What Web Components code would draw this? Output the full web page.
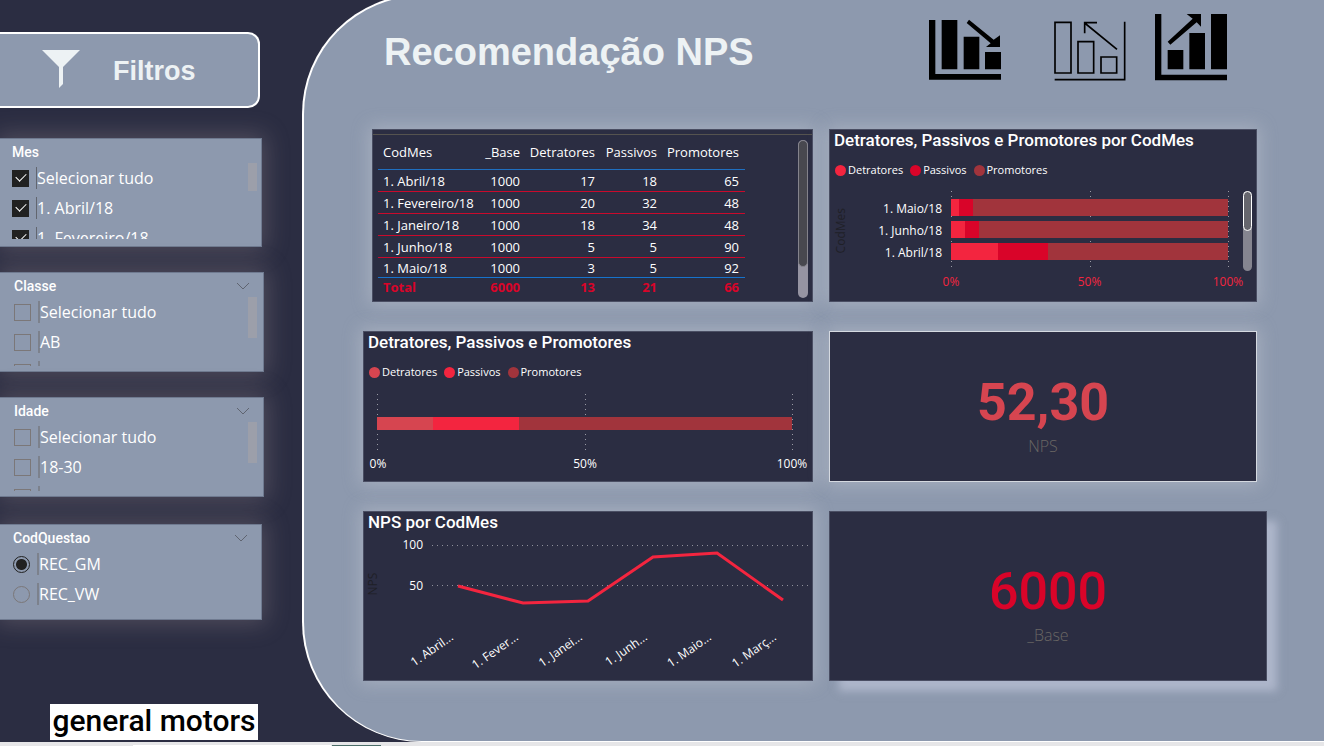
<!DOCTYPE html>
<html lang="pt-BR">
<head>
<meta charset="utf-8">
<meta name="viewport" content="width=device-width, initial-scale=1">
<title>Recomendação NPS</title>
<style>
  :root {
    --ink: #2b2d42; --steel: #8d99ae; --snow: #edf2f4;
    --red: #f3253f; --crimson: #d90429; --brick: #a1343c; --coral: #d64550;
    --ui: "Open Sans", "Noto Sans", sans-serif;
    --din: Roboto, "Open Sans", sans-serif;
  }
  body { margin: 0; background: var(--ink); font-family: var(--ui); color: #fff; }
</style>
</head>
<body>
<nps-report>
  <filter-banner slot="filters">Filtros</filter-banner>
  <slicer-panel slot="filters" class="first" name="Mes" kind="checkbox" options="Selecionar tudo|1. Abril/18|1. Fevereiro/18" checked></slicer-panel>
  <slicer-panel slot="filters" class="wide" name="Classe" kind="checkbox" options="Selecionar tudo|AB|" menu></slicer-panel>
  <slicer-panel slot="filters" class="wide" name="Idade" kind="checkbox" options="Selecionar tudo|18-30|" menu></slicer-panel>
  <slicer-panel slot="filters" class="last" name="CodQuestao" kind="radio" options="REC_GM|REC_VW" menu></slicer-panel>
  <brand-logo slot="filters">general motors</brand-logo>

  <report-header slot="header">Recomendação NPS</report-header>

  <report-card slot="cards" class="table"><score-table></score-table></report-card>
  <report-card slot="cards" class="short" heading="Detratores, Passivos e Promotores por CodMes">
    <month-bars></month-bars>
  </report-card>
  <report-card slot="cards" heading="Detratores, Passivos e Promotores"><total-bar></total-bar></report-card>
  <report-card slot="cards" class="short framed"><kpi-value label="NPS" tone="coral">52,30</kpi-value></report-card>
  <report-card slot="cards" heading="NPS por CodMes"><nps-line></nps-line></report-card>
  <report-card slot="cards" class="lifted"><kpi-value label="_Base" tone="crimson">6000</kpi-value></report-card>
</nps-report>

<script>
const define = (name, html) => {
  const template = document.createElement('template');
  customElements.define(name, class extends HTMLElement {
    connectedCallback() {
      if (this.shadowRoot) return;
      template.innerHTML = typeof html === 'function' ? html(this) : html;
      this.attachShadow({ mode: 'open' }).append(template.content.cloneNode(true));
    }
  });
};

define('nps-report', `
<style>
  :host { display: flex; flex-direction: column; min-height: 100vh; }
  .body { flex: 1; display: grid; grid-template-columns: 302px minmax(0, 1fr); overflow: hidden; }
  aside { display: flex; flex-direction: column; align-items: flex-start; padding: 32px 0 2px; }
  main { box-sizing: border-box; margin-top: -6px; padding-top: 6px; background: var(--steel);
    border: 2px solid #fff; border-right: 0; border-bottom-width: 1px; border-radius: 120px 0 0 120px; }
  .cards { display: grid; grid-template-columns: 450fr 438fr; grid-template-rows: 173px 151px 170px;
    gap: 29px 16px; padding: 0 57px 47px 59px; }
  ::slotted(.first) { margin-top: 30px; width: 262px; }
  ::slotted(.wide) { margin-top: 25px; width: 264px; }
  ::slotted(.last) { margin-top: 27px; width: 262px; }
  ::slotted(brand-logo) { margin: auto 0 0 50px; }
  ::slotted(.table) { margin-left: 9px; }
  ::slotted(.short) { margin-right: 10px; }
  footer { display: grid; grid-template-columns: 132px 198px 49px 1fr; column-gap: 1px; height: 4px; background: #e6e6e8; }
  footer i { margin-top: 3px; }
  footer .open { background: #fff; }
  footer .add { background: #4b6d68; }
</style>
<div class="body">
  <aside><slot name="filters"></slot></aside>
  <main><slot name="header"></slot><div class="cards"><slot name="cards"></slot></div></main>
</div>
<footer><i></i><i class="open"></i><i class="add"></i></footer>`);

define('filter-banner', `
<style>
  :host { box-sizing: border-box; display: flex; align-items: center; gap: 33px; width: 260px; height: 76px;
    padding-left: 42px; background: var(--steel); border: 2px solid #fff; border-left: 0; border-radius: 0 12px 12px 0; }
  h2 { margin: 0; padding-top: 2px; font: bold 27px "Liberation Sans", sans-serif; color: var(--snow); }
</style>
<svg width="38" height="40" viewBox="0 0 38 40" aria-hidden="true"><path d="M0 0H38L21 17V34L17 38V17Z" fill="#edf2f4"/></svg>
<h2><slot></slot></h2>`);

define('slicer-panel', el => {
  const name = el.getAttribute('name'), kind = el.getAttribute('kind');
  const rows = el.getAttribute('options').split('|').map((text, i) => {
    const on = el.hasAttribute('checked') || (kind === 'radio' && i === 0);
    return `<label><input type="${kind}" name="${name}"${on ? ' checked' : ''}${text ? '' : ` aria-label="${name} ${i}"`}><span>${text}</span></label>`;
  }).join('');
  const thumb = kind === 'radio' ? '' : '<i class="thumb"></i>';
  const menu = el.hasAttribute('menu')
    ? `<button aria-label="Opções de ${name}"><svg width="14" height="8" viewBox="0 0 14 8"><path d="M1 1L7 7L13 1" fill="none" stroke="#5f6470"/></svg></button>` : '';
  return `
<style>
  :host { position: relative; box-sizing: border-box; display: block; height: 100px; padding: 5px 0 5px 12px;
    background: var(--steel); border: 1px solid #6f7a90; border-left: 0;
    box-shadow: 0 0 22px 4px rgba(190, 170, 170, .26); }
  :host(.wide) { padding-left: 14px; }
  :host(.first) { height: 109px; }
  :host(.last) { height: 96px; padding-left: 13px; }
  header { display: flex; justify-content: space-between; height: 19px; padding-right: 13px; }
  h3 { margin: 0; font: 500 14px/16px var(--din); }
  button { height: 16px; padding: 0; background: none; border: 0; }
  svg { display: block; }
  fieldset { display: block; min-width: 0; margin: 0; padding: 0; border: 0; overflow: hidden; height: 69px; }
  :host(.first) fieldset { height: 76px; }
  label { display: flex; align-items: center; height: 30px; font-size: 16px; line-height: 22px; white-space: nowrap; }
  span { margin-left: 7px; height: 22px; border-left: 2px solid #7c818c; }
  :host(.first) span { border-left: 1px solid #62666f; }
  input { position: relative; box-sizing: border-box; appearance: none; flex: none; width: 17px; height: 17px; margin: 0; border: 1px solid #7b7778; }
  input[type=checkbox]:checked { background: #212121; border-color: #212121; }
  input[type=checkbox]:checked::after { content: ""; position: absolute; left: 3px; top: 2px; width: 9px; height: 5px;
    border: solid #fff; border-width: 0 0 1px 1px; transform: rotate(-45deg); }
  input[type=radio] { border-radius: 50%; }
  input[type=radio]:checked { border-color: #212121; background: radial-gradient(circle, #212121 5px, transparent 6px); }
  .thumb { position: absolute; right: 6px; top: 24px; width: 9px; height: 41px; background: #9c9faa; }
  :host(.first) .thumb { right: 4px; height: 28px; }
</style>
<header><h3>${name}</h3>${menu}</header><fieldset aria-label="${name}">${rows}</fieldset>${thumb}`;
});

define('brand-logo', `
<style>
  :host { box-sizing: border-box; display: block; width: 208px; height: 36px; background: #fff; color: #000;
    font: 500 30px/34px var(--din); text-align: center; white-space: nowrap; }
</style><slot></slot>`);

define('report-header', `
<style>
  :host { display: flex; justify-content: space-between; height: 127px; padding: 0 97px 0 80px; }
  h1 { margin: 28px 0 0; font: bold 38px/44px "Liberation Sans", sans-serif; color: var(--snow); }
  nav { display: flex; gap: 29px; height: 80px; }
  button { padding: 0; border: 0; background: none; height: 80px; }
  button:first-child { margin-right: 24px; }
  svg { display: block; }
</style>
<h1><slot></slot></h1>
<nav aria-label="Visões">
  <button aria-label="Detratores"><svg width="72" height="80" viewBox="57 3 216 240">
    <path d="M57 57H76V219H273V236H57ZM95 57H142V205H95ZM161 107H208V205H161ZM225 153H273V205H225ZM177 56L251 116L270 103V138H228L242 127L170 66Z"/></svg></button>
  <button aria-label="Passivos"><svg width="72" height="80" viewBox="432 3 216 240">
    <path d="M435 64H483V216H435ZM504 122H551V216H504ZM573 168H620V216H573ZM434 236H644V62M621 145L524 66M524 97V65H561" fill="none" stroke="#000" stroke-width="5"/></svg></button>
  <button aria-label="Promotores"><svg width="72" height="80" viewBox="735 3 216 240">
    <path d="M735 39H754V221H951V238H735ZM773 147H820V205H773ZM838 96H885V205H838ZM903 39H951V205H903ZM830 39H873V77L860 64L781 131L773 122L848 53Z"/></svg></button>
</nav>`);

define('report-card', el => `
<style>
  :host { box-sizing: border-box; display: flex; flex-direction: column; min-width: 0; background: var(--ink);
    border: 1px solid #4a4e63; box-shadow: 0 0 16px 3px rgba(210, 215, 220, .34); }
  :host(.framed) { border-color: #d5d9e0; }
  :host(.lifted) { box-shadow: 10px 10px 8px rgba(200, 205, 225, .55); }
  h2 { margin: 0; padding: 0 0 2px 4px; font: 500 17px/20px var(--din); white-space: nowrap; }
</style>
${el.hasAttribute('heading') ? `<h2>${el.getAttribute('heading')}</h2>` : ''}<slot></slot>`);

const scores = [['1. Abril/18', 1000, 17, 18, 65], ['1. Fevereiro/18', 1000, 20, 32, 48],
  ['1. Janeiro/18', 1000, 18, 34, 48], ['1. Junho/18', 1000, 5, 5, 90], ['1. Maio/18', 1000, 3, 5, 92]];
const cells = row => row.map(v => `<td>${v}</td>`).join('');

define('score-table', `
<style>
  :host { display: flex; justify-content: space-between; align-items: flex-start; flex: 1; margin-top: 4px; border-top: 1px solid #55534f; padding: 0 4px 3px 5px; }
  table { border-collapse: separate; border-spacing: 0; table-layout: fixed; width: 367px; font-size: 13px; line-height: 18px; }
  th, td { box-sizing: border-box; height: 22px; padding: 0 6px 0 0; text-align: right; font-weight: 400; white-space: nowrap;
    background: linear-gradient(var(--rule, #c90a2c), var(--rule, #c90a2c)) bottom / 100% 1px no-repeat; }
  th:first-child, td:first-child { text-align: left; padding-left: 5px; }
  thead th { --rule: #1f6fc0; height: 35px; padding-bottom: 2px; }
  tbody tr:last-child td { --rule: #1673cc; height: 20px; }
  tfoot td { --rule: transparent; height: 18px; font-weight: 700; color: var(--crimson); }
  .track { align-self: stretch; width: 10px; margin-top: 5px; border-radius: 5px; background: #9694a2; }
  .thumb { box-sizing: border-box; height: 127px; border: 1px solid #84838c; border-radius: 5px; background: #48484f; }
</style>
<table>
  <colgroup><col style="width:101px"><col style="width:47px"><col style="width:75px"><col style="width:62px"><col style="width:82px"></colgroup>
  <thead><tr><th>CodMes</th><th>_Base</th><th>Detratores</th><th>Passivos</th><th>Promotores</th></tr></thead>
  <tbody>${scores.map(r => `<tr>${cells(r)}</tr>`).join('')}</tbody>
  <tfoot><tr>${cells(['Total', 6000, 13, 21, 66])}</tr></tfoot>
</table>
<div class="track"><div class="thumb"></div></div>`);

define('chart-legend', el => `
<style>
  :host { display: flex; gap: 7px; padding: 8px 0 1px 5px; font-size: 11px; line-height: 20px; }
  span { display: flex; align-items: center; gap: 2px; }
  i { width: 11px; height: 11px; border-radius: 50%; }
</style>
${['Detratores', 'Passivos', 'Promotores'].map((t, i) =>
  `<span><i style="background:var(--${el.getAttribute('tones').split(' ')[i]})"></i>${t}</span>`).join('')}`);

const gridCss = `
  .plot { position: relative; display: flex; flex-direction: column; }
  .plot::before { content: ""; position: absolute; inset: 0 -1px 0 0;
    background:
      repeating-linear-gradient(#9a9ba5 0 1px, transparent 1px 5px) left / 1px 100% no-repeat,
      repeating-linear-gradient(#9a9ba5 0 1px, transparent 1px 5px) center / 1px 100% no-repeat,
      repeating-linear-gradient(#9a9ba5 0 1px, transparent 1px 5px) right / 1px 100% no-repeat; }
  .bar { position: relative; display: flex; }
  .ticks { display: flex; justify-content: space-between; font-size: 12px; line-height: 18px; }
  .ticks span { display: flex; justify-content: center; width: 0; }`;
const bar = (parts, tones) => `<div class="bar">${parts.map((p, i) =>
  `<i style="flex:${p};background:var(--${tones[i]})"></i>`).join('')}</div>`;
const ticks = '<div class="ticks"><span>0%</span><span>50%</span><span>100%</span></div>';
const months = [['1. Maio/18', 3, 5, 92], ['1. Junho/18', 5, 5, 90], ['1. Abril/18', 17, 18, 65]];

define('month-bars', `
<style>
  :host { display: block; }
  ${gridCss}
  .chart { display: grid; grid-template-columns: 22px 90px minmax(0, 1fr) 9px; padding: 10px 4px 0 0; }
  .axis { writing-mode: vertical-rl; transform: rotate(180deg); justify-self: center; align-self: center; font-size: 12px; line-height: 14px; color: #1f2027; }
  .names { display: flex; flex-direction: column; padding: 7px 0; font-size: 12px; line-height: 22px; text-align: right; white-space: nowrap; }
  .plot { gap: 5px; height: 72px; padding-top: 8px; margin: 0 15px 0 9px; }
  .bar { height: 17px; }
  .ticks { grid-column: 3; margin: 0 15px 0 9px; color: var(--red); padding-top: 2px; }
  .track { height: 80px; border-radius: 5px; background: #858590; }
  .thumb { box-sizing: border-box; height: 40px; border: 1px solid #fff; border-radius: 5px; background: #66666e; }
</style>
<chart-legend tones="red crimson brick"></chart-legend>
<div class="chart">
  <div class="axis">CodMes</div>
  <div class="names">${months.map(m => `<span>${m[0]}</span>`).join('')}</div>
  <div class="plot">${months.map(m => bar(m.slice(1), ['red', 'crimson', 'brick'])).join('')}</div>
  <div class="track"><div class="thumb"></div></div>
  ${ticks}
</div>`);

define('total-bar', `
<style>
  :host { display: block; }
  ${gridCss}
  .plot { height: 59px; justify-content: center; margin: 11px 20px 0 13px; }
  .bar { height: 13px; }
  .ticks { margin: 0 20px 0 14px; padding-top: 2px; }
</style>
<chart-legend tones="coral red brick"></chart-legend>
<div class="plot">${bar([135, 206, 659], ['coral', 'red', 'brick'])}</div>
${ticks}`);

const labels = ['1. Abril...', '1. Fever...', '1. Janei...', '1. Junh...', '1. Maio...', '1. Març...'];
define('nps-line', `
<style>
  :host { display: block; }
  svg { display: block; width: 100%; font-size: 12px; fill: #fff; }
</style>
<svg viewBox="1 23 448 146" role="img" aria-label="NPS por CodMes">
  <g stroke="#8f909b" stroke-dasharray="1 4"><path d="M69 34.500H446M69 74.500H446"/></g>
  <g text-anchor="end"><text x="60" y="38">100</text><text x="60" y="79">50</text></g>
  <text transform="translate(14 73) rotate(-90)" text-anchor="middle" fill="#1f2027">NPS</text>
  <path d="M95 75L160 92L225 90L290 46L354 42L420 89" fill="none" stroke="#f3253f" stroke-width="3"/>
  <g text-anchor="end">${labels.map((t, i) => `<text transform="translate(${91 + Math.round(i * 64.6)} 128) rotate(-35)">${t}</text>`).join('')}</g>
</svg>`);

define('kpi-value', el => `
<style>
  :host { flex: 1; display: flex; flex-direction: column; align-items: center; justify-content: center; padding-top: 18px; }
  strong { font: ${el.getAttribute('tone') === 'coral' ? 700 : 500} 52px/60px var(--din); color: var(--${el.getAttribute('tone')}); }
  span { font: 300 16px/26px var(--ui); color: #6a6764; }
</style>
<strong><slot></slot></strong><span>${el.getAttribute('label')}</span>`);
</script>
</body>
</html>
